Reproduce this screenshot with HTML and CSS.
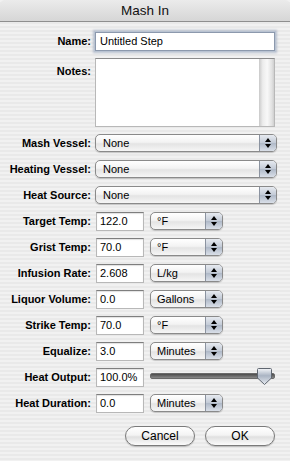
FILE: index.html
```html
<!DOCTYPE html>
<html>
<head>
    <title>Mash In</title>
    <link rel="stylesheet" href="styles.css">
</head>
<body>
    <div class="window">
        <div class="titlebar">Mash In</div>

        <div class="content">
            <!-- Naam en notities -->
            <div class="row">
                <div class="label">Name:</div>
                <div class="field wide focus">Untitled Step</div>
            </div>
            <div class="row notes-row">
                <div class="label">Notes:</div>
                <div class="notes"><div class="scroller"></div></div>
            </div>

            <!-- Keuzelijsten -->
            <div class="row">
                <div class="label">Mash Vessel:</div>
                <div class="popup wide">None<span class="arrows"></span></div>
            </div>
            <div class="row">
                <div class="label">Heating Vessel:</div>
                <div class="popup wide">None<span class="arrows"></span></div>
            </div>
            <div class="row">
                <div class="label">Heat Source:</div>
                <div class="popup wide">None<span class="arrows"></span></div>
            </div>

            <!-- Waarden met eenheid -->
            <div class="row">
                <div class="label">Target Temp:</div>
                <div class="field small">122.0</div>
                <div class="popup unit">&deg;F<span class="arrows"></span></div>
            </div>
            <div class="row">
                <div class="label">Grist Temp:</div>
                <div class="field small">70.0</div>
                <div class="popup unit">&deg;F<span class="arrows"></span></div>
            </div>
            <div class="row">
                <div class="label">Infusion Rate:</div>
                <div class="field small">2.608</div>
                <div class="popup unit">L/kg<span class="arrows"></span></div>
            </div>
            <div class="row">
                <div class="label">Liquor Volume:</div>
                <div class="field small">0.0</div>
                <div class="popup unit">Gallons<span class="arrows"></span></div>
            </div>
            <div class="row">
                <div class="label">Strike Temp:</div>
                <div class="field small">70.0</div>
                <div class="popup unit">&deg;F<span class="arrows"></span></div>
            </div>
            <div class="row">
                <div class="label">Equalize:</div>
                <div class="field small">3.0</div>
                <div class="popup unit">Minutes<span class="arrows"></span></div>
            </div>
            <div class="row">
                <div class="label">Heat Output:</div>
                <div class="field small">100.0%</div>
                <div class="slider">
                    <div class="track"></div>
                    <svg class="thumb" width="17" height="19" viewBox="0 0 17 19">
                        <defs>
                            <linearGradient id="knob" x1="0" y1="0" x2="0" y2="1">
                                <stop offset="0" stop-color="#f4f6f9"/>
                                <stop offset="0.45" stop-color="#aab4c3"/>
                                <stop offset="1" stop-color="#e6eaf0"/>
                            </linearGradient>
                        </defs>
                        <path d="M2.5 1.5 H14.5 Q15.5 1.5 15.5 2.5 V11 L8.5 17.5 L1.5 11 V2.5 Q1.5 1.5 2.5 1.5 Z" fill="url(#knob)" stroke="#5f6670" stroke-width="1"/>
                    </svg>
                </div>
            </div>
            <div class="row">
                <div class="label">Heat Duration:</div>
                <div class="field small">0.0</div>
                <div class="popup unit">Minutes<span class="arrows"></span></div>
            </div>

            <!-- Knoppen -->
            <div class="buttons">
                <div class="button">Cancel</div>
                <div class="button">OK</div>
            </div>
        </div>
    </div>
</body>
</html>
```

FILE: styles.css
```css
body {
    margin: 0;
    padding: 0;
    font-family: "Liberation Sans", Arial, sans-serif;
    color: #000000;
    background-color: #ececec;
}

/* Het venster met streepjes */
.window {
    width: 290px;
    height: 461px;
    overflow: hidden;
    background: repeating-linear-gradient(#f1f1f1 0 2px, #e9e9e9 2px 4px);
}

.titlebar {
    height: 21px;
    line-height: 21px;
    text-align: center;
    font-size: 13.5px;
    color: #111111;
    background: linear-gradient(#ebebeb, #d6d6d6);
    border-bottom: 1px solid #8e8e8e;
    border-radius: 5px 5px 0 0;
}

.content {
    display: flex;
    flex-direction: column;
    gap: 6px;
    padding-top: 9px;
}

/* Stijl voor een rij */
.row {
    display: flex;
    align-items: center;
    height: 20px;
}

.label {
    width: 91px;
    margin-right: 4px;
    text-align: right;
    font-size: 11px;
    font-weight: bold;
    flex-shrink: 0;
}

/* Tekstvelden */
.field {
    box-sizing: border-box;
    height: 19px;
    line-height: 17px;
    font-size: 11px;
    padding: 0 3px;
    background-color: #ffffff;
    border: 1px solid #b8b8b8;
    border-top-color: #7e7e7e;
    box-shadow: inset 0 1px 1px rgba(0, 0, 0, 0.12);
}

.field.wide {
    width: 180px;
    padding-left: 4px;
}

.field.small {
    width: 48px;
    margin-left: 1px;
}

.field.focus {
    border-color: #8c99ad;
    box-shadow: 0 0 0 1px #b9c3d2, 0 0 2px 2px rgba(140, 155, 180, 0.55);
}

/* Notitieveld */
.notes-row {
    height: 69px;
    align-items: flex-start;
    margin-top: 1px;
}

.notes-row .label {
    padding-top: 7px;
}

.notes {
    box-sizing: border-box;
    width: 180px;
    height: 69px;
    background-color: #ffffff;
    border: 1px solid #b8b8b8;
    border-top-color: #8a8a8a;
    display: flex;
    justify-content: flex-end;
}

.scroller {
    width: 15px;
    height: 100%;
    background: linear-gradient(to right, #c9c9c9, #ececec 25%, #f8f8f8 55%, #e2e2e2 85%, #cfcfcf);
}

/* Keuzelijsten */
.popup {
    position: relative;
    box-sizing: border-box;
    height: 18px;
    line-height: 16px;
    font-size: 11px;
    padding-left: 7px;
    border: 1px solid #8a8a8a;
    border-radius: 5px;
    background: linear-gradient(#ffffff, #f3f3f3 45%, #e4e4e4 55%, #f6f6f6);
    box-shadow: 0 1px 1px rgba(0, 0, 0, 0.18);
}

.popup.wide {
    width: 182px;
}

.popup.unit {
    width: 73px;
    margin-left: 6px;
    padding-left: 6px;
}

.arrows {
    position: absolute;
    top: 0;
    right: 0;
    bottom: 0;
    width: 16px;
    border-left: 1px solid #8b93a0;
    border-radius: 0 4px 4px 0;
    background: linear-gradient(#e6eaf0, #c2cad6 50%, #aeb8c7 51%, #d9dfe8);
}

.arrows::before,
.arrows::after {
    content: "";
    position: absolute;
    left: 5px;
    border-left: 3px solid transparent;
    border-right: 3px solid transparent;
}

.arrows::before {
    top: 3px;
    border-bottom: 4px solid #000000;
}

.arrows::after {
    bottom: 3px;
    border-top: 4px solid #000000;
}

/* Schuifregelaar */
.slider {
    position: relative;
    width: 125px;
    height: 20px;
    margin-left: 6px;
}

.track {
    position: absolute;
    left: 0;
    right: 0;
    top: 6px;
    height: 4px;
    border-radius: 2px;
    background: linear-gradient(#4c4c4c, #8a8a8a);
    border: 1px solid #6a6a6a;
}

.thumb {
    position: absolute;
    left: 106px;
    top: 0;
}

/* Knoppen */
.buttons {
    display: flex;
    justify-content: flex-end;
    gap: 10px;
    padding-right: 15px;
    margin-top: 7px;
}

.button {
    box-sizing: border-box;
    width: 70px;
    height: 20px;
    line-height: 18px;
    text-align: center;
    font-size: 12px;
    border: 1px solid #7a7a7a;
    border-radius: 10px;
    background: linear-gradient(#ffffff, #f4f4f4 45%, #e0e0e0 55%, #fbfbfb);
    box-shadow: 0 1px 1px rgba(0, 0, 0, 0.2);
}
```
